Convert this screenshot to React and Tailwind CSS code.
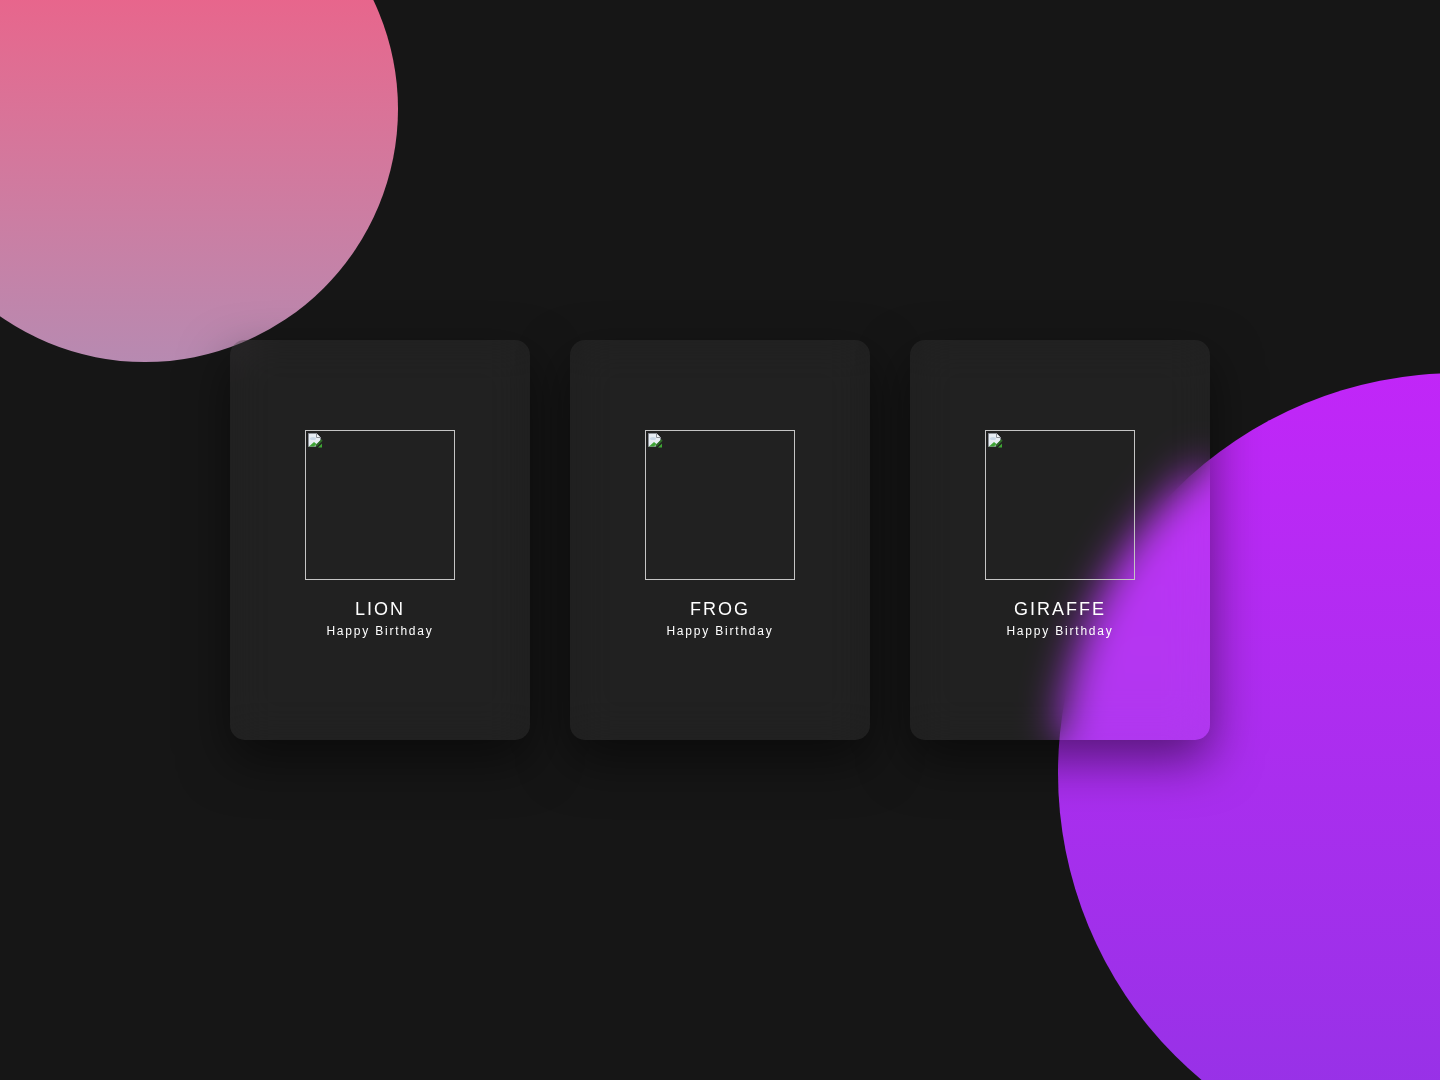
const animals = ["LION", "FROG", "GIRAFFE"];

const BrokenImage = () => (
  <svg width="16" height="16" viewBox="0 0 16 16" className="block">
    <path d="M1.5 1.5h8l4 4v3.5l-5 5.5h-7z" fill="#e8eef4" stroke="#8a8f96" />
    <path d="M9.5 1.5v4h4" fill="#f6f8fa" stroke="#8a8f96" />
    <ellipse cx="6" cy="6.5" rx="3" ry="1.6" fill="#c9d8e6" />
    <path d="M2 14.5l5-4.5 2.5 2-2.5 2.5z" fill="#3fa535" />
    <path d="M9 14l6-6" stroke="#2e6b27" strokeWidth="2" />
    <path d="M11 15.5l4-4v4z" fill="#3fa535" />
  </svg>
);

const Card = ({ name }) => (
  <div className="w-[300px] h-[400px] rounded-[15px] bg-white/[0.05] backdrop-blur-[20px] shadow-[0_20px_50px_rgba(0,0,0,0.5)] flex flex-col items-center pt-[90px]">
    <div className="w-[150px] h-[150px] border border-[#c4c4c4] p-px">
      <BrokenImage />
    </div>
    <h3 className="mt-[17px] text-[18px] leading-[24px] tracking-[2px] text-white font-normal">
      {name}
    </h3>
    <p className="mt-[2px] text-[12px] leading-[16px] tracking-[1.8px] text-white">
      Happy Birthday
    </p>
  </div>
);

export default function App() {
  return (
    <div
      className="relative w-full h-[1080px] overflow-hidden bg-[#161616] flex items-center justify-center"
      style={{ fontFamily: '"Liberation Sans", Arial, sans-serif' }}
    >
      <div className="absolute left-[-108px] top-[-144px] w-[506px] h-[506px] rounded-full bg-linear-to-b from-[#f8507d] to-[#b78ab1]" />
      <div className="absolute left-[1058px] top-[373px] w-[800px] h-[800px] rounded-full bg-linear-to-b from-[#c126f8] to-[#9332e5]" />
      <div className="relative flex gap-[40px]">
        {animals.map((a) => (
          <Card key={a} name={a} />
        ))}
      </div>
    </div>
  );
}
